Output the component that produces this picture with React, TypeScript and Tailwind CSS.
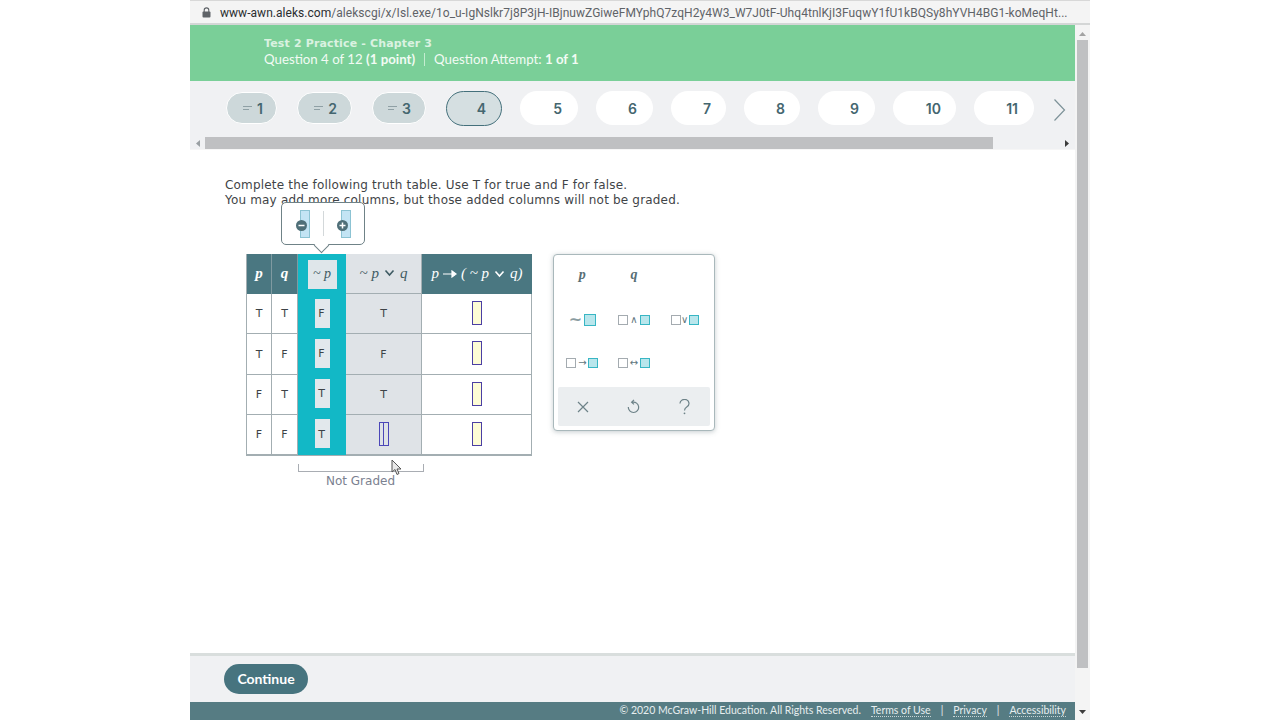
import React from "react";

const pills = [
  { n: "1", w: "w-[51px] mr-[2px] pr-[13px]", done: true },
  { n: "2", w: "w-[55px] mr-[2px] pr-[14px]", done: true },
  { n: "3", w: "w-[54px] mr-[2px] pr-[14px]", done: true },
  { n: "4", w: "w-[56px] pr-[15px]", active: true },
  { n: "5", w: "w-[58px] pr-[16px]" },
  { n: "6", w: "w-[57px] pr-[16px]" },
  { n: "7", w: "w-[55px] pr-[15px]" },
  { n: "8", w: "w-[56px] pr-[15px]" },
  { n: "9", w: "w-[57px] pr-[16px]" },
  { n: "10", w: "w-[63px] pr-[15px]" },
  { n: "11", w: "w-[60px] pr-[16px]" },
];

function Lines() {
  return (
    <svg width="11" height="8" viewBox="0 0 11 8" className="mr-[4px]">
      <path d="M1 2.5H10M1 5.5H7" stroke="#8fa0a5" strokeWidth="1" fill="none" />
    </svg>
  );
}

function V() {
  return (
    <svg width="11" height="8" viewBox="0 0 11 8" className="mx-[5px]">
      <path d="M1.5 1.5L5.5 6L9.5 1.5" stroke="currentColor" strokeWidth="1.6" fill="none" />
    </svg>
  );
}

function Arrow() {
  return (
    <svg width="14" height="8" viewBox="0 0 14 8" className="mx-[4px]">
      <path d="M0 4H10M9 1L13 4L9 7Z" stroke="#fff" strokeWidth="1.2" fill="#fff" />
    </svg>
  );
}

const Yellow = () => <span className="block w-[10px] h-[24px] bg-[#fdfcd5] border border-[#4b3fa3]" />;

const hCell = "h-[40px] pb-[1px] flex items-center justify-center bg-[#4a7781] text-white font-['Liberation_Serif',serif] italic text-[15px] font-bold border-r border-[#7f9aa1]";
const hLast = "h-[40px] pb-[1px] flex items-center justify-center bg-[#4a7781] text-white font-['Liberation_Serif',serif] italic text-[15px] whitespace-nowrap";
const cell = "h-[40.25px] pt-[2px] flex items-center justify-center border-r border-b border-[#a3aeb2] text-[11px] text-[#3d4347]";
const yCell = "h-[40.25px] pb-[1px] flex items-center justify-center border-r border-b border-[#a3aeb2]";
const tealCell = "h-[40.25px] pb-[2px] flex items-center justify-center bg-[#12b8c6] text-[11px] text-[#3d4347]";
const grayCell = "h-[40.25px] pt-[2px] flex items-center justify-center bg-[#dfe3e7] border-r border-b border-[#a3aeb2] text-[11px] text-[#3d4347]";

const Sq = ({ teal, big }: { teal?: boolean; big?: boolean }) => (
  <span
    className={
      teal
        ? big
          ? "block w-[12px] h-[12px] bg-[#b9e6ec] border border-[#38b6c4]"
          : "block w-[10px] h-[10px] bg-[#b9e6ec] border border-[#38b6c4]"
        : "block w-[10px] h-[10px] bg-white border border-[#a4abb0]"
    }
  />
);

const Op = ({ children, narrow }: { children: React.ReactNode; narrow?: boolean }) => (
  <span className={(narrow ? "w-[8px]" : "w-[12px]") + " text-[10px] leading-none text-[#5f777e] flex justify-center"}>{children}</span>
);

function PopBar({ minus }: { minus?: boolean }) {
  return (
    <span className="relative block w-[10px] h-[28px] bg-[#c3e4f4] border border-[#8cc3d3]">
      <svg width="13" height="13" viewBox="0 0 13 13" className="absolute left-[-6px] top-[8px]">
        <circle cx="6.5" cy="6.5" r="5.5" fill="#4f6f78" />
        <path d={minus ? "M3.5 6.5H9.5" : "M3.5 6.5H9.5M6.5 3.5V9.5"} stroke="#fff" strokeWidth="1.5" fill="none" />
      </svg>
    </span>
  );
}

export default function App() {
  return (
    <div className="w-[1280px] h-[720px] overflow-hidden bg-white flex justify-center font-['Liberation_Sans',sans-serif]">
      <div className="w-[900px] h-full flex flex-col">
        {/* address bar */}
        <div className="h-[25px] shrink-0 bg-[#f4f4f4] border-t border-[#d8d8d8] border-b-2 border-b-[#d4d6d6] flex items-center pl-[12px] pt-[1px]">
          <svg width="9" height="11" viewBox="0 0 9 11" className="mr-[9px]">
            <rect x="0.5" y="4.5" width="8" height="6" rx="1" fill="#5f6368" />
            <path d="M2.2 5V3.2a2.3 2.3 0 0 1 4.6 0V5" stroke="#5f6368" strokeWidth="1.1" fill="none" />
          </svg>
          <span className="font-['Roboto',sans-serif] text-[12px] tracking-[0.04px] text-[#5f6368] whitespace-nowrap">
            <span className="text-[#2a2d30]">www-awn.aleks.com</span>
            /alekscgi/x/Isl.exe/1o_u-IgNslkr7j8P3jH-IBjnuwZGiweFMYphQ7zqH2y4W3_W7J0tF-Uhq4tnlKjI3FuqwY1fU1kBQSy8hYVH4BG1-koMeqHt...
          </span>
        </div>

        <div className="flex-1 flex min-h-0">
          <div className="w-[885px] flex flex-col">
            {/* green header */}
            <div className="h-[56px] shrink-0 bg-[#7acf98] pl-[74px] pt-[12px] text-[#f2fbf4]">
              <div className="font-['DejaVu_Sans',sans-serif] font-bold text-[11px] leading-[14px] opacity-80 tracking-[0.15px]">Test 2 Practice - Chapter 3</div>
              <div className="font-['Lato',sans-serif] text-[13.25px] leading-[16px] flex items-center whitespace-nowrap">
                <span>Question 4 of 12 <b>(1 point)</b></span>
                <span className="w-px h-[13px] bg-[#c4ecd0] mx-[9px]" />
                <span>Question Attempt: <b>1 of 1</b></span>
              </div>
            </div>

            {/* question nav */}
            <div className="h-[69px] shrink-0 bg-[#f0f1f3] flex flex-col">
              <div className="h-[56px] flex items-center pl-[36px] pb-[2px] gap-[18px] font-['Inter',sans-serif] font-semibold text-[14px] text-[#44666f]">
                {pills.map((p) => (
                  <div
                    key={p.n}
                    className={
                      p.w +
                      " flex items-center justify-end rounded-full " +
                      (p.active
                        ? "h-[35px] bg-[#d5dfe1] border-[1.5px] border-[#44707b]"
                        : p.done
                        ? "h-[32px] bg-[#cdd8da] border border-white"
                        : "h-[34px] bg-white")
                    }
                  >
                    {p.done && <Lines />}
                    {p.n}
                  </div>
                ))}
                <svg width="13" height="24" viewBox="0 0 13 24" className="ml-[1px] mt-[4px]">
                  <path d="M1.5 1.5L11.5 12L1.5 22.5" stroke="#7d9298" strokeWidth="1.2" fill="none" />
                </svg>
              </div>
              <div className="h-[12px] flex items-center">
                <span className="w-[15px] flex justify-center text-[#9aa0a3]">
                  <svg width="4" height="7" viewBox="0 0 4 7"><path d="M4 0V7L0 3.5Z" fill="currentColor" /></svg>
                </span>
                <span className="w-[788px] h-[12px] bg-[#bfc0c2]" />
                <span className="flex-1 flex justify-end pr-[6px] text-[#3c3c3c]">
                  <svg width="4" height="7" viewBox="0 0 4 7"><path d="M0 0V7L4 3.5Z" fill="currentColor" /></svg>
                </span>
              </div>
              <div className="h-px bg-[#f6f6f6]" />
            </div>

            {/* main */}
            <div className="flex-1 min-h-0 bg-white pl-[35px] pt-[28px] font-['DejaVu_Sans',sans-serif]">
              <div className="text-[12px] leading-[15px] text-[#3f4447] tracking-[0.18px]">
                <div>Complete the following truth table. Use T for true and F for false.</div>
                <div>You may add more columns, but those added columns will not be graded.</div>
              </div>

              <div className="flex items-start mt-[46px] ml-[21px]">
                <div className="relative">
                  {/* column popup */}
                  <div className="absolute left-[35px] top-[-52px] w-[84px] h-[43px] bg-white border-[1.5px] border-[#6f8287] rounded-[5px] flex items-center justify-center pl-[4px] z-10">
                    <PopBar minus />
                    <span className="w-px h-[25px] bg-[#d3d8da] ml-[13px] mr-[17px]" />
                    <PopBar />
                    <span className="absolute left-[34px] bottom-[-7px] w-[11px] h-[11px] rotate-45 bg-white border-r-[1.5px] border-b-[1.5px] border-[#6f8287]" />
                  </div>

                  <div className="grid grid-cols-[25px_26px_48px_76px_110px] w-[286px] border-l border-b border-[#a3aeb2]">
                    <div className={hCell}>p</div>
                    <div className={hCell}>q</div>
                    <div className="h-[40px] flex items-center justify-center bg-[#12b8c6]">
                      <span className="w-[29px] h-[29px] pb-[1px] bg-[#dfe6ea] flex items-center justify-center font-['Liberation_Serif',serif] italic text-[14px] text-[#3f5b63]">~ p</span>
                    </div>
                    <div className="h-[40px] pb-[1px] flex items-center justify-center bg-[#dfe3e7] border-r border-b border-[#a3aeb2] font-['Liberation_Serif',serif] italic text-[15px] text-[#3f5b63]">
                      ~ p<V />q
                    </div>
                    <div className={hLast}>
                      p<Arrow />( ~ p<V />q)
                    </div>

                    {[["T", "T", "F", "T"], ["T", "F", "F", "F"], ["F", "T", "T", "T"], ["F", "F", "T", ""]].map((r, i) => (
                      <React.Fragment key={i}>
                        <div className={cell}>{r[0]}</div>
                        <div className={cell}>{r[1]}</div>
                        <div className={tealCell}>
                          <span className="w-[15px] h-[29px] bg-[#e2e8ec] flex items-center justify-center pr-[1px] pt-[2px]">{r[2]}</span>
                        </div>
                        <div className={grayCell}>
                          {r[3] ? (
                            r[3]
                          ) : (
                            <span className="w-[10px] h-[24px] border border-[#4b47b8] flex justify-center mb-[3px]">
                              <span className="block w-px h-full bg-[#4b47b8]" />
                            </span>
                          )}
                        </div>
                        <div className={yCell}>
                          <Yellow />
                        </div>
                      </React.Fragment>
                    ))}
                  </div>

                  {/* not graded bracket */}
                  <div className="ml-[52px] mt-[8px] w-[126px] h-[8px] border-x border-b border-[#a9adb3]" />
                  <div className="ml-[52px] w-[125px] mt-[1px] text-center text-[12px] leading-[16px] text-[#7b8190]">Not Graded</div>

                  {/* mouse cursor */}
                  <svg width="11" height="17" viewBox="0 0 11 17" className="absolute left-[145px] top-[205px]">
                    <path d="M1 1V13L4 10.5L6 15.5L8 14.5L6 10H10Z" fill="#e8e8e8" stroke="#555" strokeWidth="1" />
                  </svg>
                </div>

                {/* palette */}
                <div className="ml-[21px] w-[162px] h-[177px] bg-white border border-[#a9b8bb] rounded-[4px] shadow-[0_1px_5px_rgba(90,110,115,0.35)] p-[4px] flex flex-col">
                  <div className="grid grid-cols-3 grid-rows-[39px_44px_45px] flex-1">
                    <div className="flex items-center justify-center pr-[2px] pb-[8px] font-['Liberation_Serif',serif] italic font-bold text-[14px] text-[#586e75]">p</div>
                    <div className="flex items-center justify-center pb-[8px] font-['Liberation_Serif',serif] italic font-bold text-[14px] text-[#586e75]">q</div>
                    <div />
                    <div className="flex items-center justify-center pr-[2px]">
                      <span className="text-[16px] leading-none font-bold text-[#8a9ca1] mr-[2px]">~</span>
                      <Sq teal big />
                    </div>
                    <div className="flex items-center justify-center"><Sq /><Op>∧</Op><Sq teal /></div>
                    <div className="flex items-center justify-center"><Sq /><Op narrow>∨</Op><Sq teal /></div>
                    <div className="flex items-center justify-center pr-[2px] pb-[3px]"><Sq /><Op>→</Op><Sq teal /></div>
                    <div className="flex items-center justify-center pb-[3px]"><Sq /><Op>↔</Op><Sq teal /></div>
                    <div />
                  </div>
                  <div className="h-[39px] shrink-0 bg-[#ebeef0] rounded-[2px] grid grid-cols-3 text-[#6d8288]">
                    <div className="flex items-center justify-center">
                      <svg width="12" height="12" viewBox="0 0 12 12"><path d="M1 1L11 11M11 1L1 11" stroke="currentColor" strokeWidth="1.2" fill="none" /></svg>
                    </div>
                    <div className="flex items-center justify-center">
                      <svg width="13" height="15" viewBox="0 0 13 15"><path d="M5.5 3.2A5.2 5.2 0 1 1 1.3 8M7 0.8L4.6 3.2L7 5.4" stroke="currentColor" strokeWidth="1.2" fill="none" /></svg>
                    </div>
                    <div className="flex items-center justify-center">
                      <svg width="11" height="16" viewBox="0 0 11 16"><path d="M1 4.5A4.5 4 0 1 1 8 7.7C6.3 8.8 5.5 9.5 5.5 11.5" stroke="currentColor" strokeWidth="1.2" fill="none" /><circle cx="5.5" cy="14.3" r="0.9" fill="currentColor" /></svg>
                    </div>
                  </div>
                </div>
              </div>
            </div>

            {/* bottom */}
            <div className="h-[49px] shrink-0 bg-[#f0f1f3] border-t-[3px] border-[#d9dedd] pl-[34px] pt-[8px]">
              <div className="w-[84px] h-[30px] pb-[1px] rounded-full bg-[#47747f] text-white font-['Lato',sans-serif] font-bold text-[14px] flex items-center justify-center">Continue</div>
            </div>
            <div className="h-[18px] pb-[1px] shrink-0 bg-[#567c83] text-[#e6eeef] font-['Lato',sans-serif] text-[10.5px] flex items-center justify-end pr-[9px] whitespace-nowrap">
              <span className="mr-[10px]">© 2020 McGraw-Hill Education. All Rights Reserved.</span>
              <span className="border-b border-dotted border-[#c8d5d7] leading-[12px]">Terms of Use</span>
              <span className="mx-[10px]">|</span>
              <span className="border-b border-dotted border-[#c8d5d7] leading-[12px]">Privacy</span>
              <span className="mx-[10px]">|</span>
              <span className="border-b border-dotted border-[#c8d5d7] leading-[12px]">Accessibility</span>
            </div>
          </div>

          {/* vertical scrollbar */}
          <div className="w-[15px] bg-[#f4f4f4] flex flex-col items-center">
            <svg width="7" height="4" viewBox="0 0 7 4" className="mt-[7px] mb-[4px] text-[#a3a3a3]"><path d="M0 4H7L3.5 0Z" fill="currentColor" /></svg>
            <div className="w-[11px] h-[628px] bg-[#bfc0c2]" />
            <svg width="7" height="4" viewBox="0 0 7 4" className="mt-[42px] text-[#3c3c3c]"><path d="M0 0H7L3.5 4Z" fill="currentColor" /></svg>
          </div>
        </div>
      </div>
    </div>
  );
}
